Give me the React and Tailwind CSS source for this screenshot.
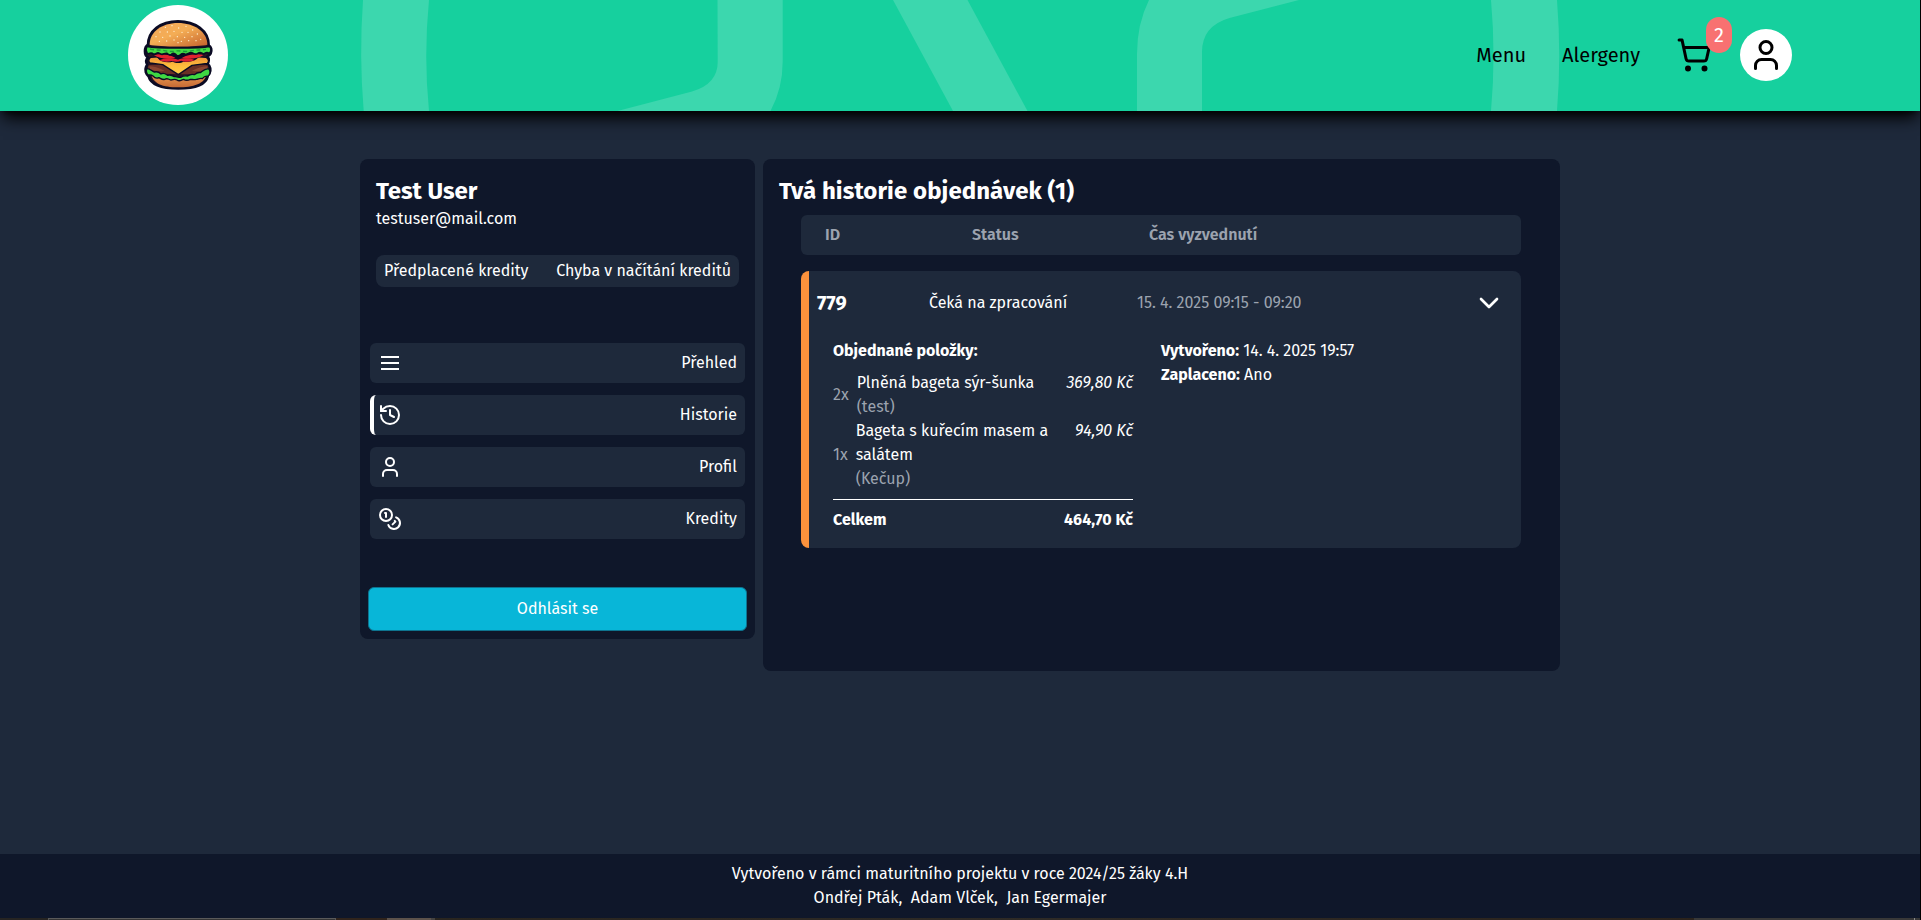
import { ChevronDown, Coins, History, ShoppingCart, User } from "lucide-react";

function BurgerLogo() {
  return (
    <svg viewBox="84 15 300 300" className="size-[100px]" aria-hidden="true">
      <circle cx="234" cy="165" r="150" fill="#fff" />
      <defs>
        <linearGradient id="bun" x1="0" y1="0" x2="1" y2="1">
          <stop offset="0" stopColor="#f2a65a" />
          <stop offset="0.45" stopColor="#f4ad55" />
          <stop offset="1" stopColor="#c4622c" />
        </linearGradient>
        <linearGradient id="heel" x1="0" y1="0" x2="0" y2="1">
          <stop offset="0" stopColor="#f0a055" />
          <stop offset="1" stopColor="#c56a35" />
        </linearGradient>
        <linearGradient id="cheese" x1="0" y1="0" x2="0" y2="1">
          <stop offset="0" stopColor="#ee8d38" />
          <stop offset="0.5" stopColor="#fdbb3c" />
          <stop offset="1" stopColor="#ffd04a" />
        </linearGradient>
      </defs>
      <path
        d="M144 136C144 92 182 64 234 64s92 28 92 72c8 4 10 16 6 24-3 6-8 7-10 10 5 4 5 10 3 16-1 3-2 5-3 7 9 4 12 18 6 28-2 4-5 5-5 8-6 26-42 36-88 36s-82-10-89-36c-8-6-12-18-8-28 1-3 3-5 4-7-4-7-4-16 2-22-12-6-12-30 0-38z"
        fill="#2a1322"
        stroke="#0b0b24"
        strokeWidth="8"
        strokeLinejoin="round"
      />
      <path d="M149 134C149 95 186 69 234 69s88 26 88 65c-28 7-144 7-173 0z" fill="url(#bun)" />
      <path d="M152 216c26 20 138 24 168 2-2 34-42 44-86 44s-78-10-82-46z" fill="url(#heel)" />
      <path d="M146 196c30-5 148-5 177 0 4 8 2 18-6 22-50 7-120 6-165-1-9-4-10-14-6-21z" fill="#6a2f25" />
      <path d="M148 199c12 0 28 4 46 13-16 4-34 2-44-4zM322 199c-12 0-28 4-46 13 16 4 34 2 44-4z" fill="#8b4631" />
      <path
        d="M152 172c54-5 110-5 166 0 8 6 10 12 4 18l-46 6-41 28-47-30-38-5c-6-6-4-12 2-17z"
        fill="url(#cheese)"
        stroke="#0b0b24"
        strokeWidth="4"
        strokeLinejoin="round"
      />
      <path d="M152 160h166l-22 12c-10 12-28 16-46 13-6 5-24 5-32 0-18 4-38 0-46-12z" fill="#0b0b24" />
      <path d="M160 164c20-3 45-2 66 9-18 6-50 3-66-9zM312 164c-20-3-45-2-66 9 18 6 50 3 66-9z" fill="#e3222f" />
      <path d="M178 181c14-8 38-8 56-2 16-6 38-5 50 2-14 5-30 5-40 1-10 4-20 4-28 1-12 3-28 3-38-2z" fill="#dc2033" />
      <path
        d="M140 139c30 6 160 6 189 0 6 7 5 17-2 22-6-6-10-2-14 0-7 3-8-6-15-3-7 2-9 8-16 3-7-3-8-6-14-2-7 3-8 6-14 3-5-3-7-3-12 2-5 5-10 5-14 0-5-5-9-5-14-1-6 4-8 0-14-3-6-1-9 3-14 3-8 0-8-6-14-4-6 2-7 7-15 1-7-4-11 3-15 1-4-7-5-15-2-22z"
        fill="#43db45"
        stroke="#0b0b24"
        strokeWidth="5"
        strokeLinejoin="round"
      />
      <path d="M150 147c14 4 26 2 38 4 14 3 26 5 40 2 14-2 30 4 44 0 16-4 30-2 46-5" fill="none" stroke="#1d9b3a" strokeWidth="4" strokeDasharray="12 8" />
      <path
        d="M141 206c8-2 14 8 22 10 8-2 14 0 20 6 8-5 14 0 20 4 8-3 14 0 20 4 8-2 14 4 20 2 8-6 14-5 20-4 8-6 14-6 20-4 8-6 12-8 18-6 8-6 14-14 26-11 5 8 4 18-4 22-6-2-12 2-16 7-6-3-12 2-18 2-8 2-12 0-18 0-8 4-14 4-20 0-8 2-12 8-20 2-8-5-12 0-18 0-8-2-12-7-18-2-8 2-12-2-18-5-8 4-12 2-18-5-6-4-10-2-16-4-4-6-5-13-2-18z"
        fill="#3fd843"
        stroke="#0b0b24"
        strokeWidth="4"
        strokeLinejoin="round"
      />
      <path
        d="M196 82h.1M216 77h.1M236 84h.1M258 79h.1M278 90h.1M180 96h.1M202 96h.1M222 94h.1M246 97h.1M264 97h.1M292 102h.1M168 110h.1M188 112h.1M210 108h.1M232 110h.1M254 112h.1M276 110h.1M302 118h.1M178 124h.1M200 123h.1M222 120h.1M244 124h.1M266 122h.1M288 122h.1M234 128h.1"
        stroke="#fff0d0"
        strokeWidth="4"
        strokeLinecap="round"
      />
    </svg>
  );
}

function HeaderPattern() {
  return (
    <svg
      viewBox="340 0 1240 111"
      className="absolute top-0 left-1/2 h-[111px] w-[1240px] -translate-x-1/2"
      fill="#3cd7ae"
      aria-hidden="true"
    >
      <path d="M363 0Q359 56 363.700 111H429Q423.500 56 429 0z" />
      <path d="M717.500 0H782.700V60Q783 88 770.500 111H617.500L692 91.500Q717.700 84 717.700 62z" />
      <path d="M893 0H967.500L1027.500 111H953z" />
      <path d="M1149 0H1299L1229.500 18Q1202 26 1202 52V111H1137V54Q1137 24 1149 0z" />
      <path d="M1491 0H1557Q1561.500 56 1557 111H1491Q1496 56 1491 0z" />
    </svg>
  );
}

function MenuLines() {
  return (
    <svg viewBox="0 0 24 24" className="size-6" stroke="currentColor" strokeWidth="2" aria-hidden="true">
      <path d="M3 6h18M3 12h18M3 18h18" />
    </svg>
  );
}

function Header() {
  return (
    <header className="relative z-10 h-[111px] bg-[#16d09e] shadow-lg shadow-black">
      <HeaderPattern />
      <div className="relative flex h-[110px] items-center justify-between px-32">
        <BurgerLogo />
        <nav className="flex items-center gap-9 text-xl text-black">
          <a>Menu</a>
          <a>Alergeny</a>
          <div className="flex items-center gap-7">
            <div className="relative">
              <ShoppingCart size={36} />
              <span className="absolute -top-5 -right-5 rounded-full bg-[#f87171] px-2 py-1 text-white">2</span>
            </div>
            <div className="rounded-full bg-white p-2">
              <User size={36} />
            </div>
          </div>
        </nav>
      </div>
    </header>
  );
}

function NavItem({ icon, label, active }) {
  return (
    <a
      className={
        active
          ? "flex h-10 items-center justify-between rounded-md border-l-4 border-white bg-[#1e293b] pr-2 pl-1"
          : "flex h-10 items-center justify-between rounded-md bg-[#1e293b] px-2"
      }
    >
      {icon}
      <span>{label}</span>
    </a>
  );
}

function Sidebar() {
  return (
    <aside className="flex h-[480px] w-[395px] flex-col rounded-lg bg-[#0f172a]">
      <div className="px-4 pt-4">
        <h2 className="text-2xl font-bold">Test User</h2>
        <p>testuser@mail.com</p>
        <div className="mt-6 flex justify-between rounded-lg bg-[#1e293b] px-2 py-1">
          <span>Předplacené kredity</span>
          <span>Chyba v načítání kreditů</span>
        </div>
      </div>
      <nav className="mt-14 flex flex-col gap-3 px-2.5">
        <NavItem icon={<MenuLines />} label="Přehled" />
        <NavItem icon={<History size={24} />} label="Historie" active />
        <NavItem icon={<User size={24} />} label="Profil" />
        <NavItem icon={<Coins size={24} />} label="Kredity" />
      </nav>
      <button className="mx-2 mt-auto mb-2 h-11 rounded-md border border-[#0e7490] bg-[#08b6d8]">Odhlásit se</button>
    </aside>
  );
}

const items = [
  { qty: "2x", name: "Plněná bageta sýr-šunka", note: "(test)", price: "369,80 Kč" },
  { qty: "1x", name: "Bageta s kuřecím masem a salátem", note: "(Kečup)", price: "94,90 Kč" },
];

function OrderCard() {
  return (
    <article className="mt-4 rounded-lg border-l-8 border-[#fb923c] bg-[#1e293b] pb-4">
      <div className="flex h-16 items-center pr-4 pl-2">
        <span className="w-28 text-xl font-bold">779</span>
        <span className="w-52">Čeká na zpracování</span>
        <span className="text-[#9ca3af]">15. 4. 2025 09:15 - 09:20</span>
        <ChevronDown size={32} className="ml-auto" />
      </div>
      <div className="mt-1 flex gap-7 pl-6">
        <div className="w-[300px]">
          <h3 className="mb-2 font-bold">Objednané položky:</h3>
          {items.map((item) => (
            <div key={item.qty} className="flex items-center">
              <span className="mr-2 text-[#9ca3af]">{item.qty}</span>
              <div className="flex-1">
                {item.name}
                <p className="text-[#9ca3af]">{item.note}</p>
              </div>
              <span className="self-start whitespace-nowrap italic">{item.price}</span>
            </div>
          ))}
          <div className="mt-2 flex justify-between border-t border-white pt-2 font-bold">
            <span>Celkem</span>
            <span>464,70 Kč</span>
          </div>
        </div>
        <div>
          <p>
            <b>Vytvořeno:</b> 14. 4. 2025 19:57
          </p>
          <p>
            <b>Zaplaceno:</b> Ano
          </p>
        </div>
      </div>
    </article>
  );
}

function Orders() {
  return (
    <section className="h-[512px] w-[797px] rounded-lg bg-[#0f172a] pt-4">
      <h1 className="pl-4 text-2xl font-bold tracking-[0.08px]">Tvá historie objednávek (1)</h1>
      <div className="mt-2 ml-[38px] w-[720px]">
        <div className="flex h-10 items-center rounded-md bg-[#1e293b] pl-6 font-semibold text-[#9ca3af]">
          <span className="w-[147px]">ID</span>
          <span className="w-[177px]">Status</span>
          <span>Čas vyzvednutí</span>
        </div>
        <OrderCard />
      </div>
    </section>
  );
}

function BottomStrip() {
  return (
    <div className="flex h-0.5">
      <div className="w-12 bg-[#262422]" />
      <div className="w-72 border-x border-t border-[#5a5a5a] bg-[#343434]" />
      <div className="w-[51px] bg-[#30241c]" />
      <div className="w-11 bg-[#5c524b]" />
      <div className="w-1 bg-[#454341]" />
      <div className="flex-1 bg-linear-to-r from-[#29251f] via-[#2e2a26] to-[#2b231c]" />
      <div className="w-[220px] bg-[#383838]" />
      <div className="w-px bg-[#8a8a8a]" />
      <div className="w-[5px] bg-[#383838]" />
    </div>
  );
}

export default function App() {
  return (
    <div className="flex h-[920px] w-[1921px] flex-col overflow-hidden border-r border-black bg-[#1e293b] font-['Fira_Sans','Noto_Sans',sans-serif] text-base text-white">
      <Header />
      <main className="mx-auto mt-12 flex flex-1 items-start gap-2">
        <Sidebar />
        <Orders />
      </main>
      <footer className="h-16 bg-[#0f172a] py-2 text-center">
        <p>Vytvořeno v rámci maturitního projektu v roce 2024/25 žáky 4.H</p>
        <p>Ondřej Pták,&nbsp; Adam Vlček,&nbsp; Jan Egermajer</p>
      </footer>
      <BottomStrip />
    </div>
  );
}
